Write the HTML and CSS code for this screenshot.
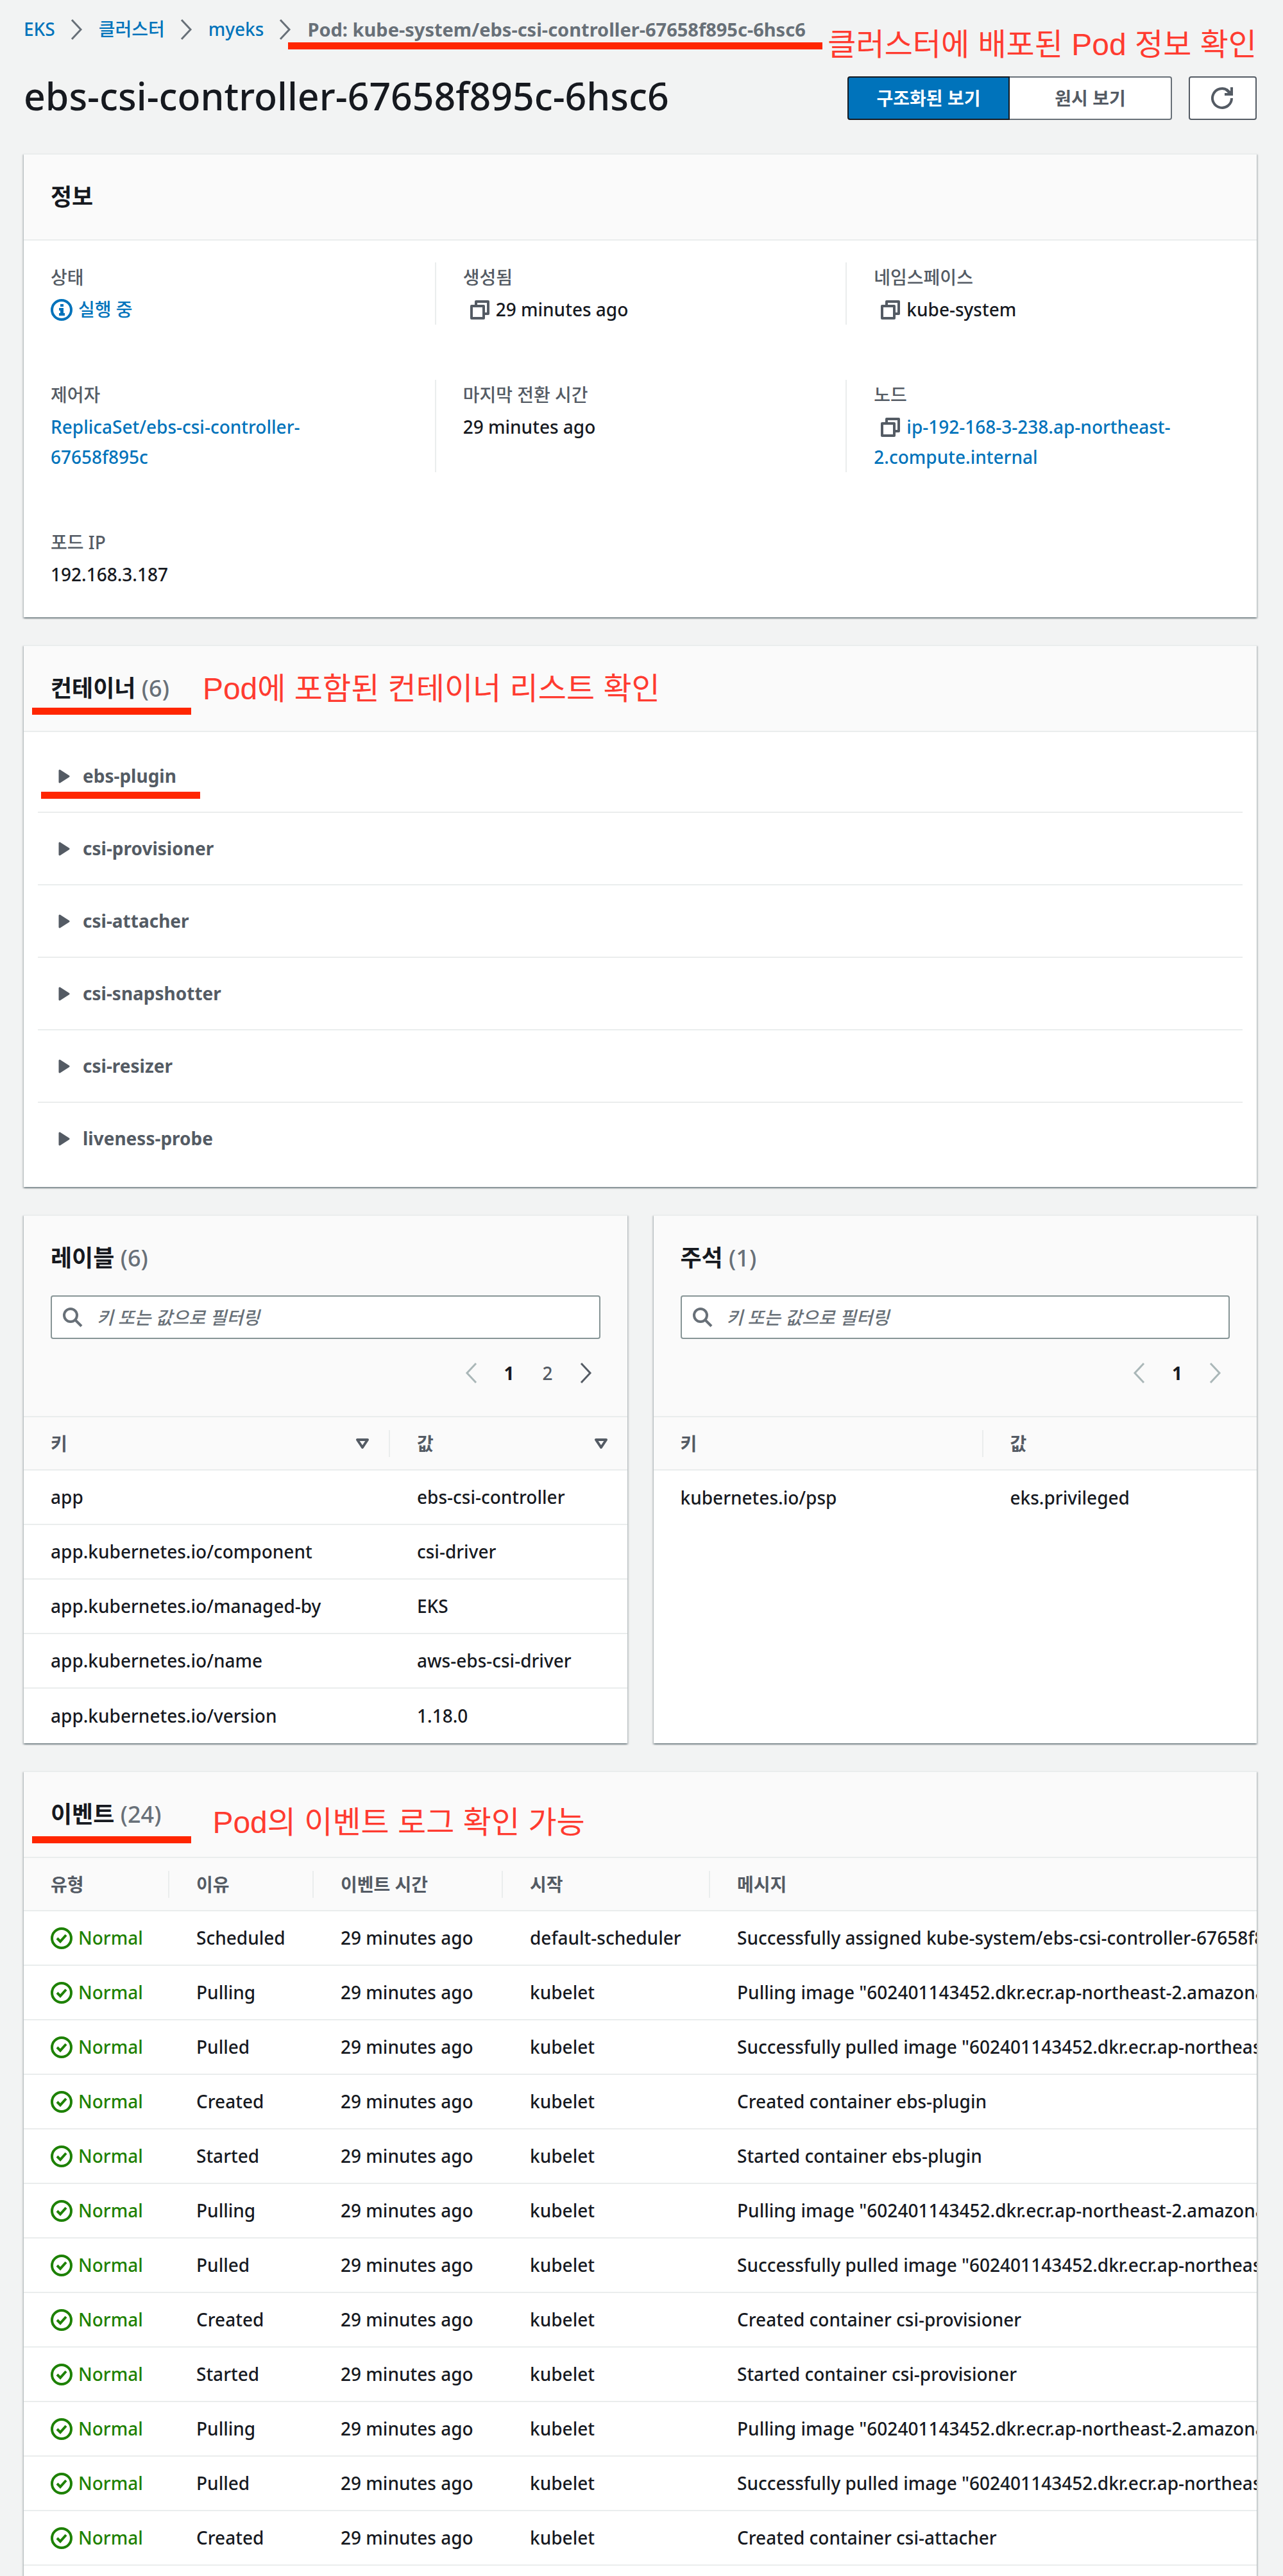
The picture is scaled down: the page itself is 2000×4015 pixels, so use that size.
FILE: index.html
```html
<!DOCTYPE html>
<html lang="ko">
<head>
  <meta charset="UTF-8" />
  <meta name="viewport" content="width=device-width, initial-scale=1.0"/>
  <title>ebs-csi-controller-67658f895c-6hsc6</title>
  <link rel="stylesheet" href="styles.css">
</head>
<body>
  <!-- icon sprite -->
  <svg class="sprite" aria-hidden="true">
    <symbol id="chevron" viewBox="0 0 20 34"><path d="M2 2l14 15L2 32" fill="none" stroke="currentColor" stroke-width="3"/></symbol>
    <symbol id="chevron-left" viewBox="0 0 20 34"><path d="M18 2L4 17l14 15" fill="none" stroke="currentColor" stroke-width="3"/></symbol>
    <symbol id="info" viewBox="0 0 34 34"><circle cx="17" cy="17" r="15" fill="none" stroke="currentColor" stroke-width="4"/><path d="M15 8h5v4h-5zM13 14h7v8h2v4h-9v-4h2v-4h-2z" fill="currentColor"/></symbol>
    <symbol id="ok" viewBox="0 0 34 34"><circle cx="17" cy="17" r="15" fill="none" stroke="currentColor" stroke-width="4"/><path d="M10 17l5 5 9-10" fill="none" stroke="currentColor" stroke-width="4"/></symbol>
    <symbol id="copy" viewBox="0 0 30 30"><path d="M2 9h19v19H2zM9 8V2h19v19h-6" fill="none" stroke="currentColor" stroke-width="4" stroke-linejoin="round"/></symbol>
    <symbol id="refresh" viewBox="0 0 36 36"><path d="M32 18a15 15 0 1 1-6-12" fill="none" stroke="currentColor" stroke-width="4"/><path d="M34 1v13H21v-4h5l-4-4 3-3 5 4V1z" fill="currentColor"/></symbol>
    <symbol id="search" viewBox="0 0 32 32"><circle cx="13" cy="13" r="10" fill="none" stroke="currentColor" stroke-width="4"/><path d="M20 20l10 10" stroke="currentColor" stroke-width="4"/></symbol>
    <symbol id="caret" viewBox="0 0 18 22"><path d="M2 2l14 9L2 20z" fill="currentColor" stroke="currentColor" stroke-width="3" stroke-linejoin="round"/></symbol>
    <symbol id="sort" viewBox="0 0 22 18"><path d="M3 3h16l-8 12z" fill="none" stroke="currentColor" stroke-width="4" stroke-linejoin="round"/></symbol>
  </svg>

  <main class="page">
    <nav class="breadcrumb">
      <a href="#">EKS</a>
      <svg class="chevron"><use href="#chevron"/></svg>
      <a href="#">클러스터</a>
      <svg class="chevron"><use href="#chevron"/></svg>
      <a href="#">myeks</a>
      <svg class="chevron"><use href="#chevron"/></svg>
      <span class="current">Pod: kube-system/ebs-csi-controller-67658f895c-6hsc6</span>
      <span class="note note-top">클러스터에 배포된 Pod 정보 확인</span>
    </nav>

    <header class="title-bar">
      <h1>ebs-csi-controller-67658f895c-6hsc6</h1>
      <div class="actions">
        <div class="segmented">
          <button type="button" class="active">구조화된 보기</button>
          <button type="button">원시 보기</button>
        </div>
        <button type="button" class="refresh" aria-label="새로 고침"><svg><use href="#refresh"/></svg></button>
      </div>
    </header>

    <section class="card">
      <div class="card-header"><h2>정보</h2></div>
      <dl class="info-grid">
        <div>
          <dt>상태</dt>
          <dd class="running"><svg class="status-icon"><use href="#info"/></svg>실행 중</dd>
        </div>
        <div>
          <dt>생성됨</dt>
          <dd><button type="button" class="copy" aria-label="복사"><svg><use href="#copy"/></svg></button>29 minutes ago</dd>
        </div>
        <div>
          <dt>네임스페이스</dt>
          <dd><button type="button" class="copy" aria-label="복사"><svg><use href="#copy"/></svg></button>kube-system</dd>
        </div>
        <div>
          <dt>제어자</dt>
          <dd><a href="#">ReplicaSet/ebs-csi-controller-67658f895c</a></dd>
        </div>
        <div>
          <dt>마지막 전환 시간</dt>
          <dd>29 minutes ago</dd>
        </div>
        <div>
          <dt>노드</dt>
          <dd><button type="button" class="copy" aria-label="복사"><svg><use href="#copy"/></svg></button><a href="#">ip-192-168-3-238.ap-northeast-2.compute.internal</a></dd>
        </div>
        <div>
          <dt>포드 IP</dt>
          <dd>192.168.3.187</dd>
        </div>
      </dl>
    </section>

    <section class="card">
      <div class="card-header marked">
        <h2>컨테이너 <span class="count">(6)</span></h2>
        <span class="note">Pod에 포함된 컨테이너 리스트 확인</span>
      </div>
      <ul class="containers">
        <li class="marked"><button type="button"><svg><use href="#caret"/></svg>ebs-plugin</button></li>
        <li><button type="button"><svg><use href="#caret"/></svg>csi-provisioner</button></li>
        <li><button type="button"><svg><use href="#caret"/></svg>csi-attacher</button></li>
        <li><button type="button"><svg><use href="#caret"/></svg>csi-snapshotter</button></li>
        <li><button type="button"><svg><use href="#caret"/></svg>csi-resizer</button></li>
        <li><button type="button"><svg><use href="#caret"/></svg>liveness-probe</button></li>
      </ul>
    </section>

    <div class="columns">
      <section class="card">
        <div class="card-header filter-header">
          <h2>레이블 <span class="count">(6)</span></h2>
          <div class="search">
            <svg><use href="#search"/></svg>
            <input type="text" placeholder="키 또는 값으로 필터링" aria-label="레이블 필터">
          </div>
          <div class="pagination">
            <button type="button" disabled aria-label="이전"><svg class="chevron"><use href="#chevron-left"/></svg></button>
            <button type="button" class="active">1</button>
            <button type="button">2</button>
            <button type="button" aria-label="다음"><svg class="chevron"><use href="#chevron"/></svg></button>
          </div>
        </div>
        <table class="labels">
          <thead>
            <tr>
              <th class="key"><div class="sortable">키<svg><use href="#sort"/></svg></div></th>
              <th><div class="sortable">값<svg><use href="#sort"/></svg></div></th>
            </tr>
          </thead>
          <tbody>
            <tr><td>app</td><td>ebs-csi-controller</td></tr>
            <tr><td>app.kubernetes.io/component</td><td>csi-driver</td></tr>
            <tr><td>app.kubernetes.io/managed-by</td><td>EKS</td></tr>
            <tr><td>app.kubernetes.io/name</td><td>aws-ebs-csi-driver</td></tr>
            <tr><td>app.kubernetes.io/version</td><td>1.18.0</td></tr>
          </tbody>
        </table>
      </section>

      <section class="card">
        <div class="card-header filter-header">
          <h2>주석 <span class="count">(1)</span></h2>
          <div class="search">
            <svg><use href="#search"/></svg>
            <input type="text" placeholder="키 또는 값으로 필터링" aria-label="주석 필터">
          </div>
          <div class="pagination">
            <button type="button" disabled aria-label="이전"><svg class="chevron"><use href="#chevron-left"/></svg></button>
            <button type="button" class="active">1</button>
            <button type="button" disabled aria-label="다음"><svg class="chevron"><use href="#chevron"/></svg></button>
          </div>
        </div>
        <table class="annotations">
          <thead>
            <tr><th class="key"><div>키</div></th><th><div>값</div></th></tr>
          </thead>
          <tbody>
            <tr><td>kubernetes.io/psp</td><td>eks.privileged</td></tr>
          </tbody>
        </table>
      </section>
    </div>

    <section class="card events-card">
      <div class="card-header marked events-header">
        <h2>이벤트 <span class="count">(24)</span></h2>
        <span class="note">Pod의 이벤트 로그 확인 가능</span>
      </div>
      <table class="events">
        <thead>
          <tr>
            <th class="type"><div>유형</div></th>
            <th class="reason"><div>이유</div></th>
            <th class="time"><div>이벤트 시간</div></th>
            <th class="from"><div>시작</div></th>
            <th><div>메시지</div></th>
          </tr>
        </thead>
        <tbody>
          <tr><td class="normal"><svg class="status-icon"><use href="#ok"/></svg>Normal</td><td>Scheduled</td><td>29 minutes ago</td><td>default-scheduler</td><td>Successfully assigned kube-system/ebs-csi-controller-67658f895c-6hsc6</td></tr>
          <tr><td class="normal"><svg class="status-icon"><use href="#ok"/></svg>Normal</td><td>Pulling</td><td>29 minutes ago</td><td>kubelet</td><td>Pulling image "602401143452.dkr.ecr.ap-northeast-2.amazonaws.com</td></tr>
          <tr><td class="normal"><svg class="status-icon"><use href="#ok"/></svg>Normal</td><td>Pulled</td><td>29 minutes ago</td><td>kubelet</td><td>Successfully pulled image "602401143452.dkr.ecr.ap-northeast-2.amazonaws.com</td></tr>
          <tr><td class="normal"><svg class="status-icon"><use href="#ok"/></svg>Normal</td><td>Created</td><td>29 minutes ago</td><td>kubelet</td><td>Created container ebs-plugin</td></tr>
          <tr><td class="normal"><svg class="status-icon"><use href="#ok"/></svg>Normal</td><td>Started</td><td>29 minutes ago</td><td>kubelet</td><td>Started container ebs-plugin</td></tr>
          <tr><td class="normal"><svg class="status-icon"><use href="#ok"/></svg>Normal</td><td>Pulling</td><td>29 minutes ago</td><td>kubelet</td><td>Pulling image "602401143452.dkr.ecr.ap-northeast-2.amazonaws.com</td></tr>
          <tr><td class="normal"><svg class="status-icon"><use href="#ok"/></svg>Normal</td><td>Pulled</td><td>29 minutes ago</td><td>kubelet</td><td>Successfully pulled image "602401143452.dkr.ecr.ap-northeast-2.amazonaws.com</td></tr>
          <tr><td class="normal"><svg class="status-icon"><use href="#ok"/></svg>Normal</td><td>Created</td><td>29 minutes ago</td><td>kubelet</td><td>Created container csi-provisioner</td></tr>
          <tr><td class="normal"><svg class="status-icon"><use href="#ok"/></svg>Normal</td><td>Started</td><td>29 minutes ago</td><td>kubelet</td><td>Started container csi-provisioner</td></tr>
          <tr><td class="normal"><svg class="status-icon"><use href="#ok"/></svg>Normal</td><td>Pulling</td><td>29 minutes ago</td><td>kubelet</td><td>Pulling image "602401143452.dkr.ecr.ap-northeast-2.amazonaws.com</td></tr>
          <tr><td class="normal"><svg class="status-icon"><use href="#ok"/></svg>Normal</td><td>Pulled</td><td>29 minutes ago</td><td>kubelet</td><td>Successfully pulled image "602401143452.dkr.ecr.ap-northeast-2.amazonaws.com</td></tr>
          <tr><td class="normal"><svg class="status-icon"><use href="#ok"/></svg>Normal</td><td>Created</td><td>29 minutes ago</td><td>kubelet</td><td>Created container csi-attacher</td></tr>
        </tbody>
      </table>
    </section>
  </main>
</body>
</html>
```

FILE: styles.css
```css
* { margin: 0; padding: 0; box-sizing: border-box; }

body {
  font-family: 'Noto Sans', 'Noto Sans CJK KR', sans-serif;
  font-size: 28px;
  font-weight: 500;
  line-height: 47px;
  background-color: #f2f3f3;
  color: #16191f;
}

a {
  color: #0073bb;
  text-decoration: none;
}

button, input {
  font: inherit;
  color: inherit;
}

button {
  background: none;
  border: none;
  cursor: pointer;
}

.sprite {
  position: absolute;
  width: 0;
  height: 0;
}

.page {
  display: flex;
  flex-direction: column;
  min-height: 100vh;
  padding: 22px 41px 0 37px;
}

/* breadcrumb */
.breadcrumb {
  position: relative;
  display: flex;
  align-items: center;
  gap: 24px;
}

.chevron {
  width: 20px;
  height: 34px;
  color: #687078;
}

.current {
  position: relative;
  font-size: 29px;
  font-weight: 700;
  color: #687078;
}

/* red highlights */
.current::after,
.marked::after {
  content: "";
  position: absolute;
  height: 11px;
  background-color: #ff2600;
}

.current::after {
  top: 44px;
  left: -30px;
  right: -26px;
}

.marked {
  position: relative;
}

.marked::after {
  left: 13px;
  top: 96px;
  width: 248px;
}

.note {
  font-family: 'Liberation Sans', 'Noto Sans CJK KR', sans-serif;
  font-size: 48px;
  font-weight: 400;
  color: #ff3b30;
  white-space: nowrap;
}

.note-top {
  position: absolute;
  right: 0;
  top: 24px;
}

/* title */
.title-bar {
  display: flex;
  justify-content: space-between;
  align-items: flex-start;
  height: 68px;
  margin: 50px 0 52px;
}

h1 {
  font-size: 59px;
  font-weight: 500;
  line-height: 60px;
}

.actions {
  display: flex;
  gap: 26px;
}

.segmented {
  display: flex;
}

.segmented button {
  width: 253px;
  height: 68px;
  font-weight: 700;
  color: #545b64;
  background-color: #fff;
  border: 2px solid #687078;
  border-left: none;
  border-radius: 0 4px 4px 0;
}

.segmented button.active {
  color: #fff;
  background-color: #0073bb;
  border: 2px solid #16191f;
  border-radius: 4px 0 0 4px;
}

.refresh {
  display: flex;
  justify-content: center;
  align-items: center;
  width: 106px;
  height: 68px;
  color: #545b64;
  background-color: #fff;
  border: 2px solid #545b64;
  border-radius: 4px;
}

.refresh svg {
  width: 36px;
  height: 36px;
}

/* cards */
.card {
  margin-bottom: 43px;
  background-color: #fff;
  border-top: 2px solid #eaeded;
  box-shadow: 0 2px 2px rgba(0, 28, 36, 0.3), 2px 2px 2px rgba(0, 28, 36, 0.15), -2px 2px 2px rgba(0, 28, 36, 0.15);
}

.card-header {
  display: flex;
  align-items: center;
  gap: 52px;
  padding: 42px;
  background-color: #fafafa;
  border-bottom: 2px solid #eaeded;
}

h2 {
  font-size: 36px;
  font-weight: 700;
  line-height: 48px;
}

.count {
  font-weight: 500;
  color: #687078;
}

.info-grid {
  display: grid;
  grid-template-columns: repeat(3, 1fr);
  row-gap: 86px;
  padding: 34px 0 43px;
}

.info-grid > div {
  padding: 0 84px 0 42px;
  border-left: 2px solid #eaeded;
}

.info-grid > div:nth-child(3n + 1) {
  border-left: none;
}

dt {
  margin-bottom: 3px;
  color: #545b64;
}

.running {
  color: #0073bb;
}

.status-icon {
  width: 34px;
  height: 34px;
  margin-right: 9px;
  vertical-align: -7px;
}

.copy {
  display: inline-block;
  margin: 0 10px 0 11px;
  line-height: 30px;
  vertical-align: -5px;
  color: #545b64;
}

.copy svg {
  display: block;
  width: 30px;
  height: 30px;
}

/* containers */
.containers {
  padding: 13px 22px 20px;
  list-style: none;
}

.containers li {
  padding: 32px;
  border-bottom: 2px solid #eaeded;
}

.containers li:last-child {
  border-bottom: none;
}

.containers li.marked::after {
  left: 5px;
  top: 80px;
}

.containers button {
  display: flex;
  align-items: center;
  gap: 20px;
  font-weight: 700;
  color: #545b64;
}

.containers svg {
  width: 18px;
  height: 22px;
}

/* labels and annotations */
.columns {
  display: grid;
  grid-template-columns: 1fr 1fr;
  gap: 41px;
}

.filter-header {
  flex-direction: column;
  align-items: stretch;
  gap: 0;
  padding-bottom: 44px;
}

.search {
  position: relative;
  margin: 34px 0 30px;
}

.search svg {
  position: absolute;
  left: 18px;
  top: 18px;
  width: 32px;
  height: 32px;
  color: #687078;
}

.search input {
  display: block;
  width: 100%;
  height: 68px;
  padding: 0 20px 0 70px;
  background-color: #fff;
  border: 2px solid #879596;
  border-radius: 4px;
  outline: none;
}

.search input::placeholder {
  font-style: italic;
  color: #687078;
  opacity: 1;
}

.pagination {
  display: flex;
  justify-content: flex-end;
  margin-right: -8px;
  color: #545b64;
}

.pagination button {
  display: flex;
  justify-content: center;
  align-items: center;
  width: 60px;
  height: 46px;
}

.pagination .active {
  font-weight: 700;
  color: #16191f;
}

.pagination .chevron {
  color: #545b64;
}

.pagination :disabled .chevron {
  color: #aab7b8;
}

table {
  width: 100%;
  table-layout: fixed;
  border-spacing: 0;
}

th {
  height: 83px;
  text-align: left;
  color: #545b64;
  background-color: #fafafa;
  border-bottom: 2px solid #eaeded;
}

th div {
  height: 42px;
  padding-left: 42px;
  line-height: 42px;
  border-left: 2px solid #eaeded;
}

th:first-child div {
  border-left: none;
}

td {
  height: 85px;
  padding-left: 44px;
  border-bottom: 2px solid #eaeded;
  white-space: nowrap;
}

td:first-child {
  padding-left: 42px;
}

.sortable {
  display: flex;
  justify-content: space-between;
  align-items: center;
  padding-right: 30px;
}

.sortable svg {
  width: 22px;
  height: 18px;
}

.labels .key {
  width: 569px;
}

.annotations .key {
  width: 512px;
}

.labels tr:last-child td {
  border-bottom: none;
}

.annotations td {
  border-bottom: none;
}

/* events */
.events-card {
  flex: 1;
  margin-bottom: 0;
  overflow: hidden;
}

.events-header {
  gap: 80px;
}

.events-header::after {
  top: 100px;
}

/* this note hangs lower than its heading */
.events-header .note {
  margin: 12px 0 -12px;
}

.events .type {
  width: 225px;
}

.events .reason {
  width: 225px;
}

.events .time {
  width: 295px;
}

.events .from {
  width: 323px;
}

.events .normal {
  color: #1d8102;
}
```
